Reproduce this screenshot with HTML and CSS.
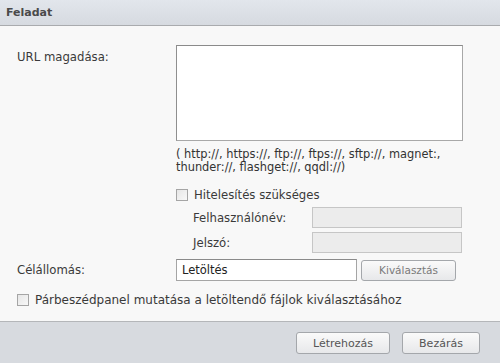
FILE: index.html
```html
<!DOCTYPE html>
<html lang="hu">
<head>
<meta charset="utf-8">
<link rel="stylesheet" href="styles.css">
</head>
<body>
<div class="dialog">
  <div class="header">Feladat</div>
  <div class="content">
    <div class="row row-url">
      <div class="label label-url">URL magadása:</div>
      <div class="textarea"></div>
    </div>
    <div class="indent hint">( http://, https://, ftp://, ftps://, sftp://, magnet:,<br>thunder://, flashget://, qqdl://)</div>
    <div class="indent check-row auth">
      <span class="checkbox"></span><span>Hitelesítés szükséges</span>
    </div>
    <div class="indent sub-row user">
      <span class="sub-label">Felhasználónév:</span><span class="field disabled"></span>
    </div>
    <div class="indent sub-row pass">
      <span class="sub-label">Jelszó:</span><span class="field disabled"></span>
    </div>
    <div class="row row-dest">
      <div class="label">Célállomás:</div>
      <div class="dest">
        <span class="field dest-input">Letöltés</span>
        <span class="btn btn-small">Kiválasztás</span>
      </div>
    </div>
    <div class="check-row dialog-check">
      <span class="checkbox"></span><span>Párbeszédpanel mutatása a letöltendő fájlok kiválasztásához</span>
    </div>
  </div>
  <div class="footer">
    <span class="btn btn-create">Létrehozás</span>
    <span class="btn btn-close">Bezárás</span>
  </div>
</div>
</body>
</html>
```

FILE: styles.css
```css
* { box-sizing: border-box; }
html, body { margin: 0; padding: 0; }
body {
  width: 500px;
  height: 363px;
  overflow: hidden;
  font-family: "DejaVu Sans", Verdana, sans-serif;
  font-size: 11.7px;
  color: #3a3a3a;
  background: #f8f8f8;
}
.dialog {
  width: 500px;
  height: 363px;
  display: flex;
  flex-direction: column;
}
.header {
  height: 26px;
  padding: 7px 0 0 6px;
  font-size: 11px;
  font-weight: bold;
  color: #4a4a4a;
  background: linear-gradient(#e2e6ec, #d6dae0);
  border-bottom: 1px solid #a9abae;
  line-height: 12px;
}
.content {
  flex: 1;
  padding: 19px 0 0 17px;
  background: #f8f8f8;
}
.row {
  display: grid;
  grid-template-columns: 159px auto;
}
.label { line-height: 13px; }
.label-url { padding-top: 6px; }
.textarea {
  width: 287px;
  height: 96px;
  background: #fff;
  border: 1px solid #a8a8a8;
  border-top-color: #8a8a8a;
  border-left-color: #8f8f8f;
}
.indent { margin-left: 159px; }
.hint {
  margin-top: 7px;
  line-height: 13px;
  font-size: 11.4px;
  color: #333;
}
.check-row {
  display: flex;
  align-items: center;
  gap: 6px;
  height: 16px;
}
.auth { margin-top: 13px; }
.checkbox {
  width: 12px;
  height: 12px;
  border: 1px solid #a5a5a5;
  background: linear-gradient(135deg, #e6e6e6, #f8f8f8);
  flex: none;
}
.sub-row {
  display: flex;
  align-items: center;
  height: 21px;
  padding-left: 17px;
}
.user { margin-top: 4px; }
.pass { margin-top: 4px; }
.sub-label { width: 119px; }
.field {
  display: block;
  height: 21px;
  width: 150px;
  border: 1px solid #c6c6c6;
}
.disabled { background: #ececec; }
.row-dest {
  margin-top: 6px;
  align-items: center;
}
.dest {
  display: flex;
  align-items: center;
  gap: 4px;
}
.dest-input {
  width: 181px;
  height: 22px;
  background: #fff;
  border: 1px solid #a5a5a5;
  border-top-color: #8a8a8a;
  padding: 4px 0 0 5px;
  line-height: 13px;
  color: #222;
  font-size: 11.5px;
}
.btn {
  display: flex;
  align-items: center;
  justify-content: center;
  border: 1px solid #a4a7ab;
  border-radius: 3px;
  background: linear-gradient(#fafafa, #e7e8ea);
  color: #555;
  font-size: 11px;
}
.btn-small {
  width: 95px;
  height: 21px;
  color: #7a7a7a;
  font-size: 10.5px;
}
.dialog-check {
  margin-top: 11px;
}
.dialog-check span:last-child { font-size: 12px; }
.footer {
  height: 42px;
  border-top: 1px solid #b4b6b9;
  background: #d7dadf;
  display: flex;
  justify-content: flex-end;
  align-items: flex-start;
  padding: 10px 20px 0 0;
  gap: 12px;
}
.btn-create { width: 94px; height: 22px; }
.btn-close { width: 78px; height: 22px; }
```
